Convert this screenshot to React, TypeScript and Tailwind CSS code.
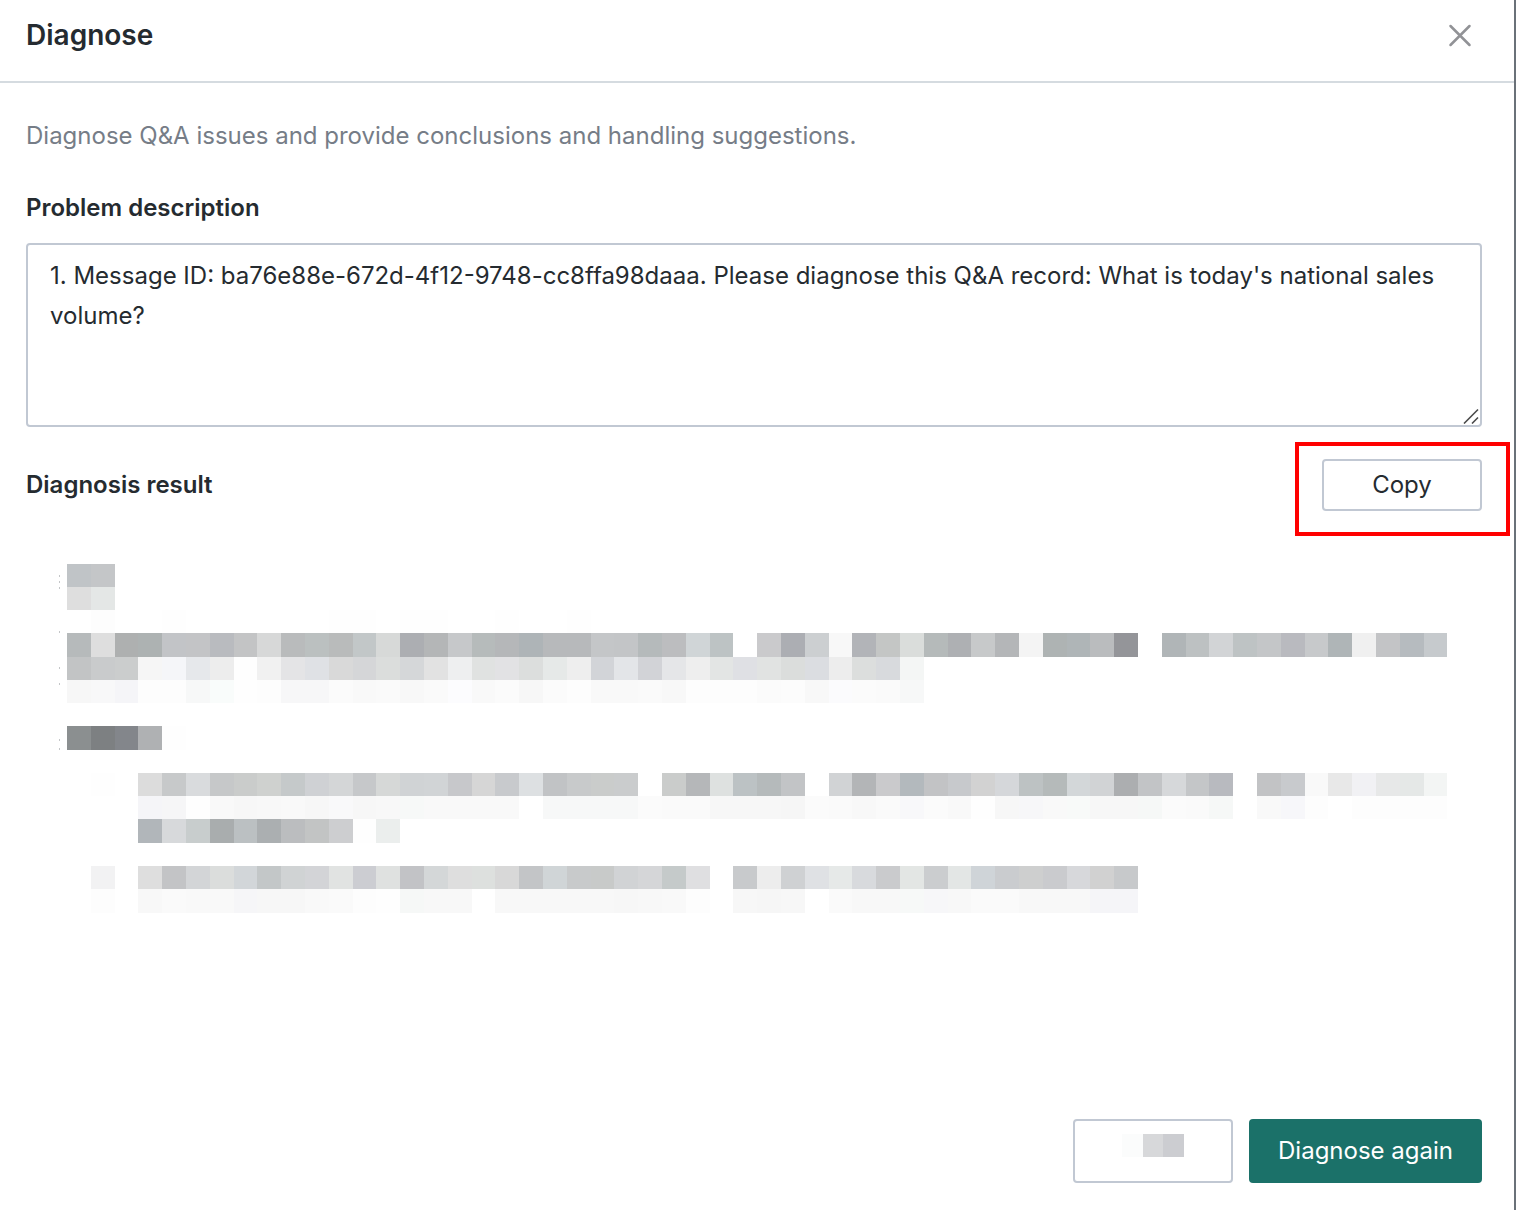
import { useState } from "react";

interface MosaicRow {
  row: number;
  start: number;
  cells: string;
}

const CELL_WIDTH = 23.8;
const CELL_HEIGHT = 23.27;

// Redacted report text. Each token is one cell, "-" leaves the cell empty and
// a two digit token is a plain gray.
const MOSAIC: MosaicRow[] = [
  { row: 0, start: 0, cells: "c0c4c7 c4c6c8" },
  { row: 1, start: 0, cells: "de e4e7e6" },
  { row: 2, start: 1, cells: "fd - - fe - - - - - - fe fe - fe fe - - fe - - fe" },
  {
    row: 3,
    start: 0,
    cells:
      "b6babb de aeb0b0 adb2b2 c2c4c7 c3c4c6 b9bbbf c3c4c5 d7d8d8 b9bbbc bbc0c0 b9bbbb c2c7c8 d7d9d8 acaeb2 b4b6b7 c6c8ca b6bbbb b5b7b9 aeb4b7 b7b9bb b7b9bb c4c6c8 c3c5c7 b5babb bcbdbf d0d5d7 bdc3c4 - cacacc acaeb3 cccfd1 f8 b2b4b8 c4c6c5 dadddb b5baba aeb0b3 c7c9ca b4b6b8 f4 aeb3b3 afb5b7 babcbe 949599 - b0b5b7 bdc1c2 d2d4d6 bec3c4 c4c6c8 b9babf c7c9cb afb5b7 f0 c3c4c6 b6bbbf c6cacd",
  },
  {
    row: 4,
    start: 0,
    cells:
      "c2c4c5 c9cbcc cbcdcd f6 f5f6f9 e6e8eb ed fe f1 e4e4e6 dfe1e5 d9 d5d6d8 dbdddc d5d7d9 e2 eeeff0 e0e2e1 e2e2e4 dcdedd e6e9e8 ee d2d4d8 e3e5e8 d2d3d7 e5e6e8 ee e3e5e4 dfe0e4 e1e3e2 dbdddc dbdde1 ed dcdedd d8dadd f4f6f5",
  },
  {
    row: 5,
    start: 0,
    cells:
      "f7 f8f8f9 f5f5f8 fd fd f7f8f8 f9fcfb fe fd f7f7f8 f7f7f8 fb f9 fa f8 fa fcfcfe f9 fb f7 fb fd f9 f9 fa f8 fd fd fd fb fc f8 fbfbfd fb fa f7f8f8",
  },
  { row: 7, start: 0, cells: "8b8f90 7d8082 83868b afb1b3 fe" },
  {
    row: 9,
    start: 1,
    cells:
      "fe - dc c7c9ca d9dbdd c6c8c9 cacccb cfd1cf c5c9ca cfd1d4 d4d6d7 c6c8ca d6d8d7 d0d3d5 d1d4d6 c7c8cb d6 c8cacd dde0e2 c1c3c5 c8cacb cacccb cacccd - cacccb b5b7b9 dee1e0 bcc2c4 b5babb c2c4c6 - d1d3d5 b3b5b7 cacacc b3b9bd c2c3c5 c7c9cc d2 d5d7da bdc2c3 b5baba d3d7d9 d1d3d5 acaeb0 c2c4c6 d6d8da c4c6c8 b8babf - c2c3c5 c8cacd f9 e8 f1f1f4 e7e8e8 e5e8e7 f3f5f4",
  },
  {
    row: 10,
    start: 3,
    cells:
      "f5f5f8 f6f6f7 fe f9 f7 f8 f9 f7 f9f9fa f7 f8 f7f9f8 f9 f9 f9 f9 - f7f8f8 f7f8f8 f7f8f8 f7f8f8 fb fa fa f7 f7 f7 f6 fb fa f8 fa f8f8fa fb f9 fe f7 f7f7f9 f9 f8faf9 f7 f7 f6f8f7 fb fa f6f8f7 - f9 f7f7fa fd - fd fd fd fd",
  },
  {
    row: 11,
    start: 3,
    cells: "b1b6ba d7d9db c8cdcd a9adae bbc0c2 abafb1 bbbdbf c2c4c4 cdced0 fe ebeeed",
  },
  {
    row: 13,
    start: 1,
    cells:
      "f2f2f3 - de c3c4c6 d3d5d7 dbdddc d2d6d9 c3c7c8 d0d3d4 d3d4d7 e1e3e2 cccdd2 dfe1e0 c2c3c6 d4d7d8 de dde0de d8 c3c5c7 d0d5d7 c8cacb c8cac9 d1d3d5 d5d6d8 c5caca dfdfe1 - c8cacc ed cfd1d3 dfe1e4 e6e9e8 d8dadd cacbcd e3e6e4 cbcdcf e3e6e5 cfd4d8 cacccf cecfcf cacbce d7d8db d1 c7c9cb",
  },
  {
    row: 14,
    start: 1,
    cells:
      "fd - f8 fa f9 f9 f6f6f8 f7 f7 f9 fa fd fe f6f8f7 f8 f8 - f8 f8 f8 f8 f8 f7 f8 f9 fd - f7 f6 f7 - fa f8 f8 f7f9f8 f7f7f9 f8 fa fa f8 f8 f8 f5f5f8 f5f5f8",
  },
];

const TICKS = [12, 18, 24, 68, 104, 120, 176, 185];

function toColor(token: string) {
  return token.length === 2 ? `#${token}${token}${token}` : `#${token}`;
}

function ResultMosaic() {
  return (
    <svg
      viewBox="0 0 1390 350"
      shapeRendering="crispEdges"
      role="img"
      aria-labelledby="result-title"
      className="block w-full"
    >
      <filter id="soften" colorInterpolationFilters="sRGB">
        <feGaussianBlur stdDeviation="0.6" />
      </filter>
      <g filter="url(#soften)">
        {MOSAIC.map(({ row, start, cells }) =>
          cells.split(" ").map((token, i) =>
            token === "-" ? null : (
              <rect
                key={`${row}-${i}`}
                x={9 + (start + i) * CELL_WIDTH}
                y={0.5 + row * CELL_HEIGHT}
                width={CELL_WIDTH}
                height={CELL_HEIGHT}
                fill={toColor(token)}
              />
            )
          )
        )}
      </g>
      {TICKS.map((y) => (
        <rect key={y} x={1} y={y} width={1} height={2} fill="#c4c6c8" />
      ))}
    </svg>
  );
}

export default function App() {
  const [problem, setProblem] = useState(
    "1. Message ID: ba76e88e-672d-4f12-9748-cc8ffa98daaa. Please diagnose this Q&A record: What is today's national sales volume?"
  );

  return (
    <div className="flex min-h-screen flex-col border-r-2 border-[#6a7178] bg-white font-['Inter',sans-serif] text-2xl text-[#252b30]">
      {/* Header */}
      <header className="flex items-center justify-between border-b-2 border-[#d5dbe0] pt-[13px] pr-[38px] pb-[23px] pl-[26px]">
        <h1 className="text-[28px] leading-[45px] font-semibold">Diagnose</h1>
        <button type="button" aria-label="Close" className="p-1 text-[#919296]">
          <svg viewBox="0 0 24 24" className="size-6" fill="none" stroke="currentColor" strokeWidth="2.5" strokeLinecap="round">
            <path d="M2.500 2 21.500 21M21.500 2 2.500 21" />
          </svg>
        </button>
      </header>

      {/* Body */}
      <main className="flex flex-1 flex-col pt-[33px] pr-8 pb-[27px] pl-[26px]">
        <p className="leading-10 text-[#767d87]">
          Diagnose Q&amp;A issues and provide conclusions and handling suggestions.
        </p>

        <label htmlFor="problem" className="mt-8 leading-10 font-semibold">
          Problem description
        </label>
        <div className="relative mt-[15px]">
          <textarea
            id="problem"
            value={problem}
            onChange={(e) => setProblem(e.target.value)}
            className="block h-[184px] w-full resize-none rounded border-2 border-[#c1c8d3] px-[22px] py-[11px] leading-10 outline-none"
          />
          <svg
            viewBox="0 0 16 16"
            className="pointer-events-none absolute right-[3px] bottom-[3px] size-4"
            fill="none"
            stroke="#4b4b4b"
            strokeWidth="1.6"
          >
            <path d="M1 15.500 15 1.500M9 15.500 15 9.500" />
          </svg>
        </div>

        {/* Result */}
        <div className="mt-8 flex items-center justify-between">
          <h2 id="result-title" className="leading-10 font-semibold">
            Diagnosis result
          </h2>
          <div className="relative">
            <button
              type="button"
              className="block h-[52px] w-40 rounded border-2 border-[#c1c8d3] leading-10"
            >
              Copy
            </button>
            <div className="pointer-events-none absolute -top-[17px] -right-7 -bottom-[25px] -left-[27px] border-4 border-[#ff0000]" />
          </div>
        </div>
        <div className="mt-[52px] mr-[34px] ml-8">
          <ResultMosaic />
        </div>

        {/* Actions */}
        <div className="mt-auto flex justify-end gap-4">
          <button
            type="button"
            aria-label="Cancel"
            className="flex h-16 w-40 justify-center rounded border-2 border-[#c1c8d3] pt-[13px]"
          >
            <svg viewBox="0 0 62 23" shapeRendering="crispEdges" className="h-[23px] w-[62px]">
              <rect width="21" height="23" fill="#fbfcfc" />
              <rect x="21" width="20" height="23" fill="#d7d8da" />
              <rect x="41" width="21" height="23" fill="#cccdd1" />
            </svg>
          </button>
          <button type="button" className="h-16 rounded bg-[#1b7169] px-[29px] text-white">
            Diagnose again
          </button>
        </div>
      </main>
    </div>
  );
}
